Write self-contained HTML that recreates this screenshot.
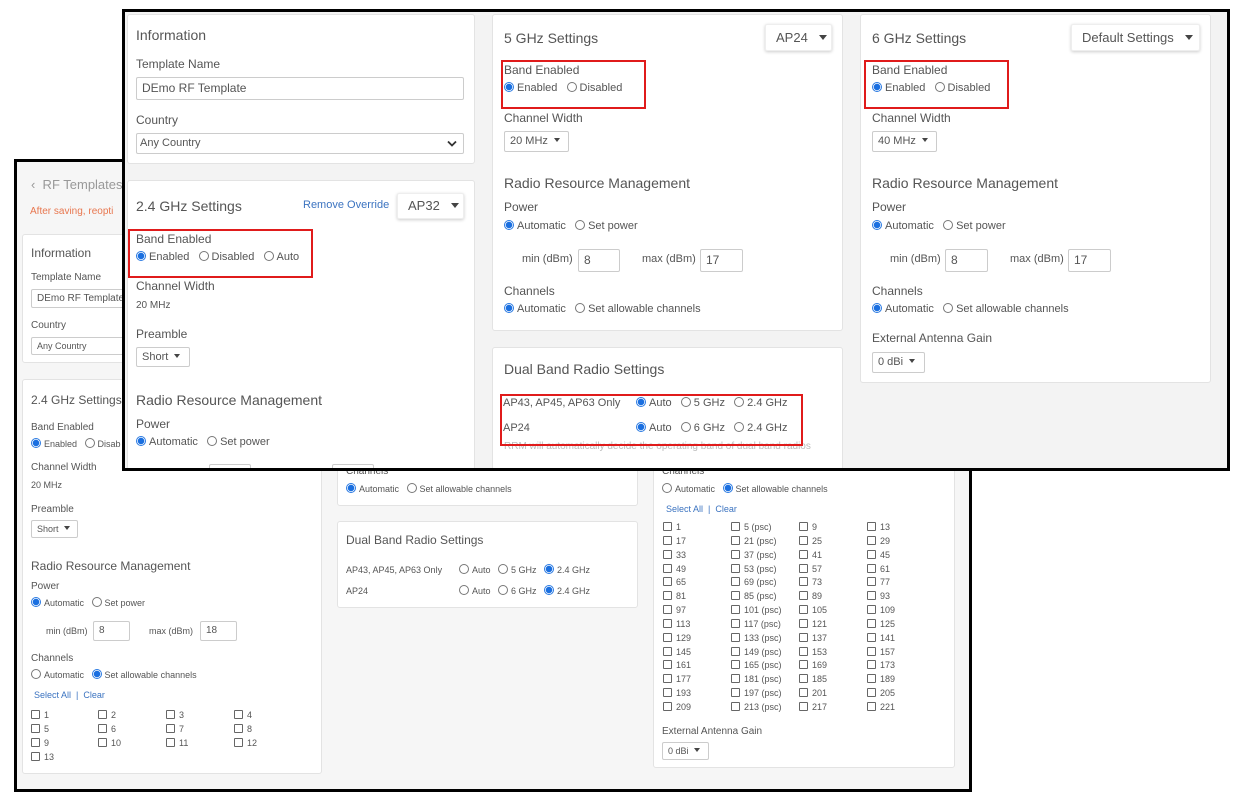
<!DOCTYPE html>
<html><head><meta charset="utf-8"><style>
*{box-sizing:border-box;margin:0;padding:0}
body{width:1237px;height:793px;background:#fff;position:relative;overflow:hidden;font-family:"Liberation Sans",sans-serif;color:#555}
.a{position:absolute;white-space:nowrap}
.frame{position:absolute;background:#f6f6f6;border:3px solid #000}
.card{position:absolute;background:#fff;border:1px solid #e3e3e3;border-radius:3px}
.in{position:absolute;background:#fff;border:1px solid #ccc;border-radius:2px;color:#555;padding-left:5px;white-space:nowrap}
.red{position:absolute;border:2px solid #e01b1b}
.r{display:inline-block;width:10px;height:10px;border:1px solid #777;border-radius:50%;vertical-align:-1px;margin-right:3px;background:#fff}
.r.on{border:1px solid #2a7ae2;background:radial-gradient(circle,#1a6fe0 0 3px,#fff 3.5px)}
.c{display:inline-block;width:9px;height:9px;border:1px solid #666;border-radius:1px;vertical-align:-1px;margin-right:4px}
.dd{position:absolute;background:#fff;border:1px solid #eee;box-shadow:0 1px 3px rgba(0,0,0,.2);border-radius:2px;color:#555;white-space:nowrap}
.tri{display:inline-block;width:0;height:0;border-left:4px solid transparent;border-right:4px solid transparent;border-top:5px solid #444;vertical-align:2px}
.blue{color:#3b73c0}
</style></head><body>

<!-- BACK FRAME -->
<div class="frame" style="left:14px;top:159px;width:958px;height:633px"></div>
<div class="a" style="left:31px;top:177px;font-size:13px;color:#999">&#8249;&nbsp; RF Templates</div>
<div class="a" style="left:30px;top:206px;font-size:10px;color:#e8774f">After saving, reopti</div>
<div class="card" style="left:22px;top:234px;width:300px;height:129px"></div>
<div class="a" style="left:31px;top:246px;font-size:12px">Information</div>
<div class="a" style="left:31px;top:272px;font-size:10px">Template Name</div>
<div class="in" style="left:31px;top:289px;width:200px;height:19px;font-size:10px;line-height:17px">DEmo RF Template</div>
<div class="a" style="left:31px;top:320px;font-size:10px">Country</div>
<div class="in" style="left:31px;top:337px;width:200px;height:18px;font-size:9px;line-height:16px">Any Country</div>

<div class="card" style="left:22px;top:379px;width:300px;height:395px"></div>
<div class="a" style="left:31px;top:393px;font-size:12px">2.4 GHz Settings</div>
<div class="a" style="left:31px;top:422px;font-size:10px">Band Enabled</div>
<div class="a" style="left:31px;top:438px;font-size:9px"><span class="r on"></span>Enabled &nbsp; <span class="r"></span>Disab</div>
<div class="a" style="left:31px;top:462px;font-size:10px">Channel Width</div>
<div class="a" style="left:31px;top:480px;font-size:9px">20 MHz</div>
<div class="a" style="left:31px;top:504px;font-size:10px">Preamble</div>
<div class="in" style="left:31px;top:520px;width:47px;height:18px;font-size:9px;line-height:16px">Short &nbsp;<span class="tri" style="border-width:4px 3px 0"></span></div>
<div class="a" style="left:31px;top:559px;font-size:12px">Radio Resource Management</div>
<div class="a" style="left:31px;top:581px;font-size:10px">Power</div>
<div class="a" style="left:31px;top:597px;font-size:9px"><span class="r on"></span>Automatic &nbsp; <span class="r"></span>Set power</div>
<div class="a" style="left:46px;top:626px;font-size:9px">min (dBm)</div>
<div class="in" style="left:93px;top:621px;width:37px;height:20px;font-size:10px;line-height:18px">8</div>
<div class="a" style="left:149px;top:626px;font-size:9px">max (dBm)</div>
<div class="in" style="left:200px;top:621px;width:37px;height:20px;font-size:10px;line-height:18px">18</div>
<div class="a" style="left:31px;top:653px;font-size:10px">Channels</div>
<div class="a" style="left:31px;top:669px;font-size:9px"><span class="r"></span>Automatic &nbsp; <span class="r on"></span>Set allowable channels</div>
<div class="a blue" style="left:34px;top:690px;font-size:9px">Select All &nbsp;| &nbsp;Clear</div>
<div class="a" style="left:31px;top:708px;font-size:9px;line-height:14px">
<span class="c"></span>1<br><span class="c"></span>5<br><span class="c"></span>9<br><span class="c"></span>13</div>
<div class="a" style="left:98px;top:708px;font-size:9px;line-height:14px"><span class="c"></span>2<br><span class="c"></span>6<br><span class="c"></span>10</div>
<div class="a" style="left:166px;top:708px;font-size:9px;line-height:14px"><span class="c"></span>3<br><span class="c"></span>7<br><span class="c"></span>11</div>
<div class="a" style="left:234px;top:708px;font-size:9px;line-height:14px"><span class="c"></span>4<br><span class="c"></span>8<br><span class="c"></span>12</div>

<div class="card" style="left:337px;top:440px;width:301px;height:66px"></div>
<div class="a" style="left:346px;top:466px;font-size:10px">Channels</div>
<div class="a" style="left:346px;top:483px;font-size:9px"><span class="r on"></span>Automatic &nbsp; <span class="r"></span>Set allowable channels</div>
<div class="card" style="left:337px;top:521px;width:301px;height:87px"></div>
<div class="a" style="left:346px;top:533px;font-size:12px">Dual Band Radio Settings</div>
<div class="a" style="left:346px;top:565px;font-size:9px">AP43, AP45, AP63 Only</div>
<div class="a" style="left:459px;top:564px;font-size:9px"><span class="r"></span>Auto &nbsp; <span class="r"></span>5 GHz &nbsp; <span class="r on"></span>2.4 GHz</div>
<div class="a" style="left:346px;top:586px;font-size:9px">AP24</div>
<div class="a" style="left:459px;top:585px;font-size:9px"><span class="r"></span>Auto &nbsp; <span class="r"></span>6 GHz &nbsp; <span class="r on"></span>2.4 GHz</div>

<div class="card" style="left:653px;top:440px;width:302px;height:328px"></div>
<div class="a" style="left:662px;top:466px;font-size:10px">Channels</div>
<div class="a" style="left:662px;top:483px;font-size:9px"><span class="r"></span>Automatic &nbsp; <span class="r on"></span>Set allowable channels</div>
<div class="a blue" style="left:666px;top:504px;font-size:9px">Select All &nbsp;| &nbsp;Clear</div>
<div class="a" style="left:663px;top:521px;font-size:9px;line-height:13.85px"><span class="c"></span>1<br><span class="c"></span>17<br><span class="c"></span>33<br><span class="c"></span>49<br><span class="c"></span>65<br><span class="c"></span>81<br><span class="c"></span>97<br><span class="c"></span>113<br><span class="c"></span>129<br><span class="c"></span>145<br><span class="c"></span>161<br><span class="c"></span>177<br><span class="c"></span>193<br><span class="c"></span>209</div>
<div class="a" style="left:731px;top:521px;font-size:9px;line-height:13.85px"><span class="c"></span>5 (psc)<br><span class="c"></span>21 (psc)<br><span class="c"></span>37 (psc)<br><span class="c"></span>53 (psc)<br><span class="c"></span>69 (psc)<br><span class="c"></span>85 (psc)<br><span class="c"></span>101 (psc)<br><span class="c"></span>117 (psc)<br><span class="c"></span>133 (psc)<br><span class="c"></span>149 (psc)<br><span class="c"></span>165 (psc)<br><span class="c"></span>181 (psc)<br><span class="c"></span>197 (psc)<br><span class="c"></span>213 (psc)</div>
<div class="a" style="left:799px;top:521px;font-size:9px;line-height:13.85px"><span class="c"></span>9<br><span class="c"></span>25<br><span class="c"></span>41<br><span class="c"></span>57<br><span class="c"></span>73<br><span class="c"></span>89<br><span class="c"></span>105<br><span class="c"></span>121<br><span class="c"></span>137<br><span class="c"></span>153<br><span class="c"></span>169<br><span class="c"></span>185<br><span class="c"></span>201<br><span class="c"></span>217</div>
<div class="a" style="left:867px;top:521px;font-size:9px;line-height:13.85px"><span class="c"></span>13<br><span class="c"></span>29<br><span class="c"></span>45<br><span class="c"></span>61<br><span class="c"></span>77<br><span class="c"></span>93<br><span class="c"></span>109<br><span class="c"></span>125<br><span class="c"></span>141<br><span class="c"></span>157<br><span class="c"></span>173<br><span class="c"></span>189<br><span class="c"></span>205<br><span class="c"></span>221</div>
<div class="a" style="left:662px;top:726px;font-size:10px">External Antenna Gain</div>
<div class="in" style="left:662px;top:742px;width:47px;height:18px;font-size:9px;line-height:16px">0 dBi &nbsp;<span class="tri" style="border-width:4px 3px 0"></span></div>

<!-- FRONT FRAME -->
<div class="frame" style="left:122px;top:9px;width:1108px;height:462px;background:#f3f3f3"></div>
<div class="card" style="left:127px;top:14px;width:348px;height:150px"></div>
<div class="a" style="left:136px;top:27px;font-size:14px">Information</div>
<div class="a" style="left:136px;top:57px;font-size:12px">Template Name</div>
<div class="in" style="left:136px;top:77px;width:328px;height:23px;font-size:12px;line-height:21px">DEmo RF Template</div>
<div class="a" style="left:136px;top:113px;font-size:12px">Country</div>
<div class="in" style="left:136px;top:133px;width:328px;height:21px;font-size:11px;line-height:19px;padding-left:3px">Any Country<svg style="position:absolute;right:6px;top:6px" width="10" height="7" viewBox="0 0 10 7"><path d="M1 1.5 5 5.5 9 1.5" fill="none" stroke="#333" stroke-width="1.8"/></svg></div>

<div class="card" style="left:127px;top:180px;width:348px;height:290px"></div>
<div class="a" style="left:136px;top:198px;font-size:14px">2.4 GHz Settings</div>
<div class="a blue" style="left:303px;top:199px;font-size:11px">Remove Override</div>
<div class="dd" style="left:397px;top:193px;width:67px;height:26px;font-size:13px;line-height:24px;padding-left:10px">AP32 &nbsp;&nbsp;<span class="tri"></span></div>
<div class="red" style="left:128px;top:229px;width:185px;height:49px"></div>
<div class="a" style="left:136px;top:232px;font-size:12px">Band Enabled</div>
<div class="a" style="left:136px;top:251px;font-size:11px"><span class="r on"></span>Enabled &nbsp; <span class="r"></span>Disabled &nbsp; <span class="r"></span>Auto</div>
<div class="a" style="left:136px;top:279px;font-size:12px">Channel Width</div>
<div class="a" style="left:136px;top:300px;font-size:10px">20 MHz</div>
<div class="a" style="left:136px;top:327px;font-size:12px">Preamble</div>
<div class="in" style="left:136px;top:347px;width:54px;height:20px;font-size:11px;line-height:18px">Short &nbsp;<span class="tri" style="border-width:4px 3px 0"></span></div>
<div class="a" style="left:136px;top:392px;font-size:14px">Radio Resource Management</div>
<div class="a" style="left:136px;top:417px;font-size:12px">Power</div>
<div class="a" style="left:136px;top:436px;font-size:11px"><span class="r on"></span>Automatic &nbsp; <span class="r"></span>Set power</div>
<div class="in" style="left:209px;top:464px;width:42px;height:6px"></div>
<div class="in" style="left:332px;top:464px;width:42px;height:6px"></div>

<div class="card" style="left:492px;top:14px;width:351px;height:317px"></div>
<div class="a" style="left:504px;top:30px;font-size:14px">5 GHz Settings</div>
<div class="dd" style="left:765px;top:24px;width:67px;height:27px;font-size:13px;line-height:25px;padding-left:10px">AP24 &nbsp;&nbsp;<span class="tri"></span></div>
<div class="red" style="left:501px;top:60px;width:145px;height:49px"></div>
<div class="a" style="left:504px;top:63px;font-size:12px">Band Enabled</div>
<div class="a" style="left:504px;top:82px;font-size:11px"><span class="r on"></span>Enabled &nbsp; <span class="r"></span>Disabled</div>
<div class="a" style="left:504px;top:111px;font-size:12px">Channel Width</div>
<div class="in" style="left:504px;top:131px;width:65px;height:21px;font-size:11px;line-height:19px">20 MHz &nbsp;<span class="tri" style="border-width:4px 3px 0"></span></div>
<div class="a" style="left:504px;top:175px;font-size:14px">Radio Resource Management</div>
<div class="a" style="left:504px;top:200px;font-size:12px">Power</div>
<div class="a" style="left:504px;top:220px;font-size:11px"><span class="r on"></span>Automatic &nbsp; <span class="r"></span>Set power</div>
<div class="a" style="left:522px;top:253px;font-size:11px">min (dBm)</div>
<div class="in" style="left:578px;top:249px;width:42px;height:23px;font-size:12px;line-height:21px">8</div>
<div class="a" style="left:642px;top:253px;font-size:11px">max (dBm)</div>
<div class="in" style="left:700px;top:249px;width:43px;height:23px;font-size:12px;line-height:21px">17</div>
<div class="a" style="left:504px;top:284px;font-size:12px">Channels</div>
<div class="a" style="left:504px;top:303px;font-size:11px"><span class="r on"></span>Automatic &nbsp; <span class="r"></span>Set allowable channels</div>

<div class="card" style="left:492px;top:347px;width:351px;height:123px"></div>
<div class="a" style="left:504px;top:361px;font-size:14px">Dual Band Radio Settings</div>
<div class="a" style="left:503px;top:397px;font-size:11px">AP43, AP45, AP63 Only</div>
<div class="a" style="left:636px;top:397px;font-size:11px"><span class="r on"></span>Auto &nbsp; <span class="r"></span>5 GHz &nbsp; <span class="r"></span>2.4 GHz</div>
<div class="a" style="left:503px;top:422px;font-size:11px">AP24</div>
<div class="a" style="left:636px;top:422px;font-size:11px"><span class="r on"></span>Auto &nbsp; <span class="r"></span>6 GHz &nbsp; <span class="r"></span>2.4 GHz</div>
<div class="a" style="left:504px;top:441px;font-size:10px;color:#bbb">RRM will automatically decide the operating band of dual band radios</div>
<div class="red" style="left:500px;top:394px;width:303px;height:52px"></div>

<div class="card" style="left:860px;top:14px;width:351px;height:369px"></div>
<div class="a" style="left:872px;top:30px;font-size:14px">6 GHz Settings</div>
<div class="dd" style="left:1071px;top:24px;width:129px;height:27px;font-size:13px;line-height:25px;padding-left:10px">Default Settings &nbsp;&nbsp;<span class="tri"></span></div>
<div class="red" style="left:864px;top:60px;width:145px;height:49px"></div>
<div class="a" style="left:872px;top:63px;font-size:12px">Band Enabled</div>
<div class="a" style="left:872px;top:82px;font-size:11px"><span class="r on"></span>Enabled &nbsp; <span class="r"></span>Disabled</div>
<div class="a" style="left:872px;top:111px;font-size:12px">Channel Width</div>
<div class="in" style="left:872px;top:131px;width:65px;height:21px;font-size:11px;line-height:19px">40 MHz &nbsp;<span class="tri" style="border-width:4px 3px 0"></span></div>
<div class="a" style="left:872px;top:175px;font-size:14px">Radio Resource Management</div>
<div class="a" style="left:872px;top:200px;font-size:12px">Power</div>
<div class="a" style="left:872px;top:220px;font-size:11px"><span class="r on"></span>Automatic &nbsp; <span class="r"></span>Set power</div>
<div class="a" style="left:890px;top:253px;font-size:11px">min (dBm)</div>
<div class="in" style="left:945px;top:249px;width:43px;height:23px;font-size:12px;line-height:21px">8</div>
<div class="a" style="left:1010px;top:253px;font-size:11px">max (dBm)</div>
<div class="in" style="left:1068px;top:249px;width:43px;height:23px;font-size:12px;line-height:21px">17</div>
<div class="a" style="left:872px;top:284px;font-size:12px">Channels</div>
<div class="a" style="left:872px;top:303px;font-size:11px"><span class="r on"></span>Automatic &nbsp; <span class="r"></span>Set allowable channels</div>
<div class="a" style="left:872px;top:331px;font-size:12px">External Antenna Gain</div>
<div class="in" style="left:872px;top:352px;width:53px;height:21px;font-size:11px;line-height:19px">0 dBi &nbsp;<span class="tri" style="border-width:4px 3px 0"></span></div>

<div style="position:absolute;left:122px;top:468px;width:1108px;height:3px;background:#000"></div>
</body></html>
